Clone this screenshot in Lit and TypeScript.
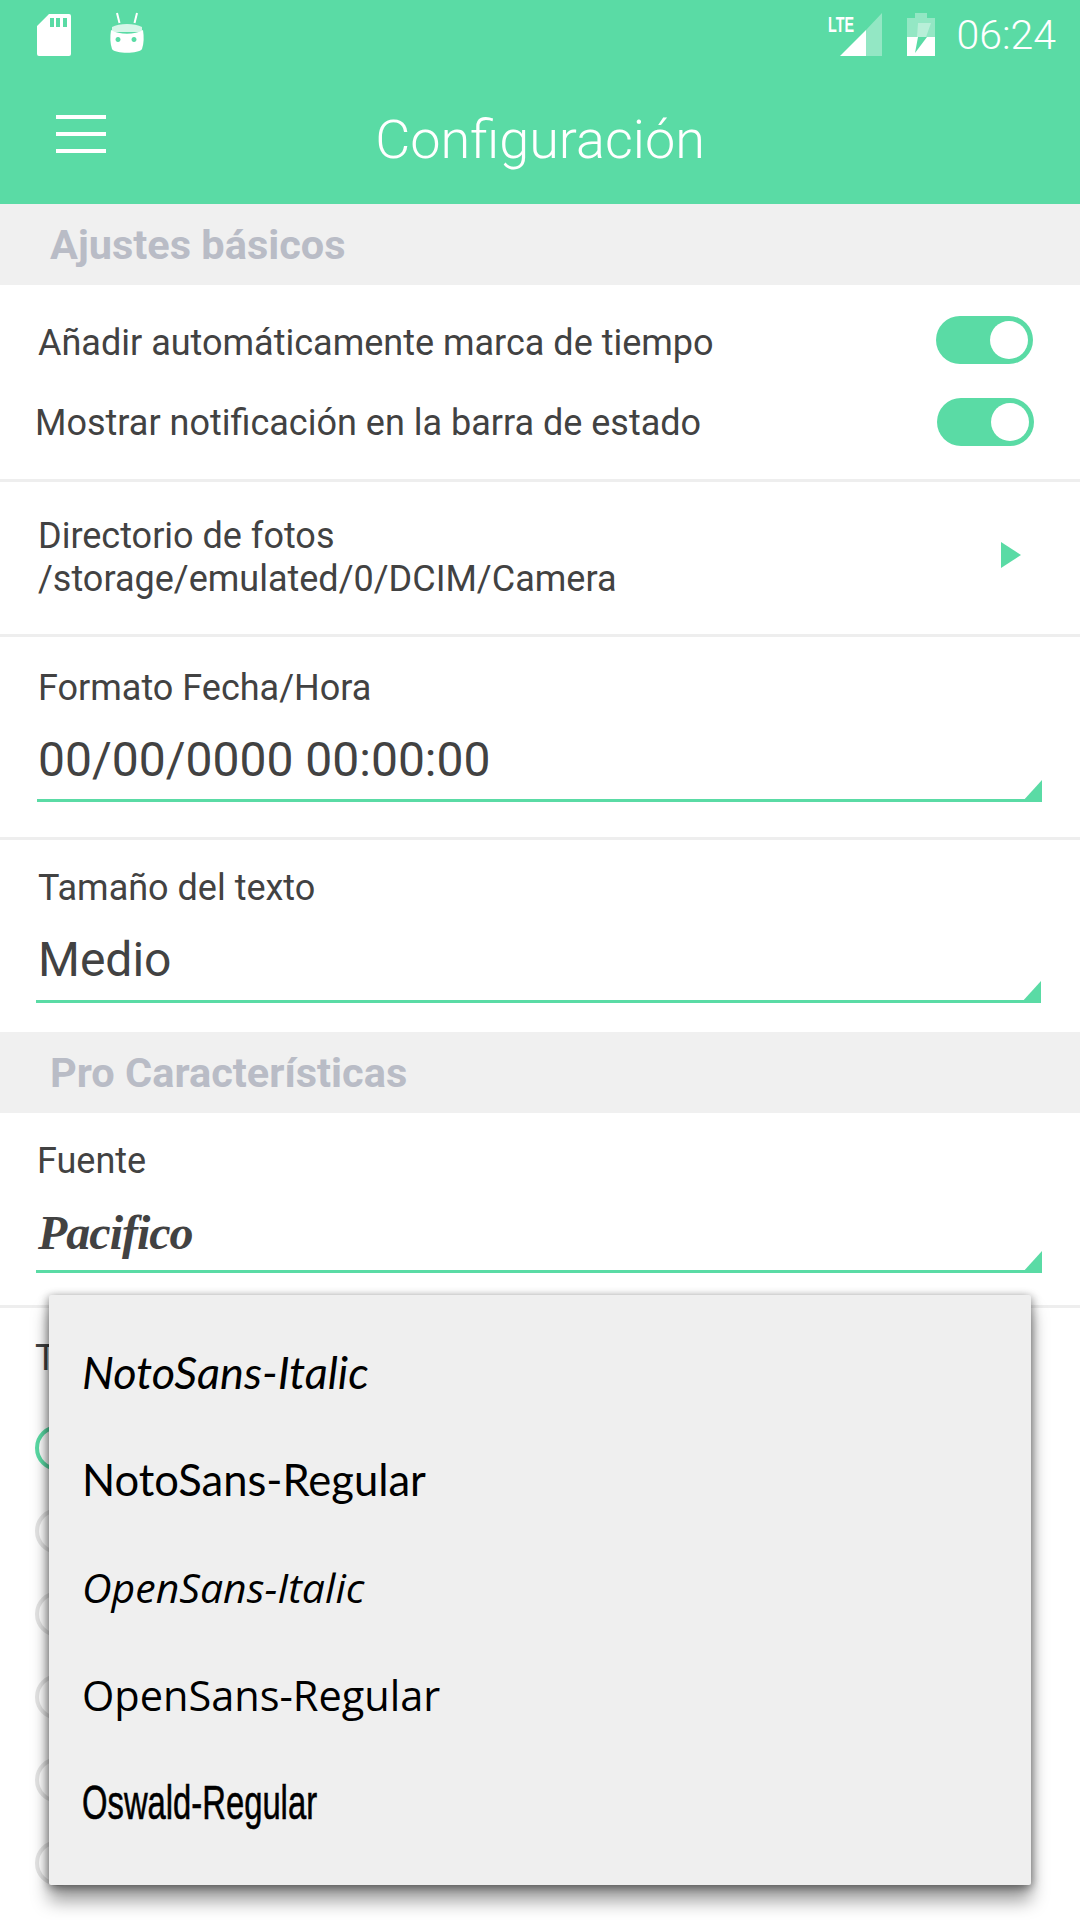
import { LitElement, html, css, svg } from "lit";
import { customElement } from "lit/decorators.js";

const fonts = [
  { name: "NotoSans-Italic", cls: "nunito-i" },
  { name: "NotoSans-Regular", cls: "nunito" },
  { name: "OpenSans-Italic", cls: "open-i" },
  { name: "OpenSans-Regular", cls: "open" },
  { name: "Oswald-Regular", cls: "oswald" },
];

const corner = svg`<svg class="corner" width="20" height="22" viewBox="0 0 20 22"><path d="M0 22 L20 0 V22 Z" fill="#5adba5"/></svg>`;

@customElement("app-root")
export class AppRoot extends LitElement {
  static styles = css`
    :host { display: block; width: 1080px; height: 1920px; overflow: hidden; position: relative; background: #fff; font-family: Roboto, sans-serif; color: #424242; }
    .top { height: 204px; background: #5adba5; color: #fff; display: flex; flex-direction: column; }
    .status { height: 70px; display: flex; align-items: center; padding: 0 24px 0 36px; }
    .status .sd { margin-right: 37px; }
    .status .droid { margin-top: -2px; }
    .status .spacer { flex: 1; }
    .status .lte { margin-right: 24px; }
    .status .bat { margin-right: 20px; }
    .clock { font-size: 41px; line-height: 70px; font-weight: 300; }
    .toolbar { flex: 1; position: relative; display: flex; align-items: center; justify-content: center; padding-top: 6px; }
    .title { font-size: 54px; line-height: 64px; font-weight: 300; }
    .menu { position: absolute; left: 56px; top: 45px; width: 50px; height: 38px; display: flex; flex-direction: column; justify-content: space-between; }
    .menu i { display: block; height: 4px; background: #fff; }
    .band { height: 81px; background: #f0f0f0; padding-left: 50px; display: flex; align-items: center; font-size: 41.500px; line-height: 48px; font-weight: 700; color: #b9bcc6; }
    .toggles { height: 194px; border-bottom: 3px solid #eee; position: relative; }
    .t-row { display: flex; align-items: center; justify-content: space-between; font-size: 36px; line-height: 44px; }
    .t-row.one { padding: 22px 47px 0 38px; height: 66px; }
    .t-row.one > span:first-child { padding-top: 6px; }
    .t-row.two { padding: 15px 46px 0 35px; height: 67px; }
    .t-row.two > span:first-child { padding-top: 2px; }
    .switch { width: 97px; height: 48px; border-radius: 24px; background: #5adba5; position: relative; flex: none; }
    .knob { position: absolute; right: 5px; top: 5px; width: 38px; height: 38px; border-radius: 50%; background: #fff; }
    .dir { height: 152px; border-bottom: 3px solid #eee; padding: 0 59px 0 38px; display: flex; align-items: center; justify-content: space-between; font-size: 36px; line-height: 43px; }
    .dir .txt { margin-top: -1px; }
    .dir svg { margin-bottom: 7px; }
    .field { border-bottom: 3px solid #eee; position: relative; padding-left: 38px; }
    .field.f1 { height: 200px; }
    .field.f2 { height: 192px; border-bottom: 0; }
    .field.f3 { height: 192px; }
    .lab { font-size: 36px; line-height: 40px; }
    .f1 .lab { padding-top: 31px; }
    .f2 .lab { padding-top: 28px; }
    .f3 .lab { padding-top: 28px; margin-left: -1px; }
    .val { font-size: 48px; line-height: 60px; }
    .f1 .val { margin-top: 22px; }
    .f2 .val { margin-top: 22px; }
    .pacifico { font-family: "Liberation Serif", serif; font-style: italic; font-weight: 700; font-size: 48px; line-height: 60px; margin-top: 22px; letter-spacing: -1px; }
    .rule { position: absolute; left: 37px; right: 38px; height: 3px; background: #5adba5; }
    .f1 .rule { top: 162px; }
    .f2 .rule { top: 160px; left: 36px; right: 39px; }
    .f3 .rule { top: 157px; left: 36px; }
    .corner { position: absolute; right: 38px; display: block; }
    .f1 .corner { top: 143px; }
    .f2 .corner { top: 141px; right: 39px; }
    .f3 .corner { top: 138px; }
    .after { height: 60px; padding: 30px 0 0 35px; font-size: 36px; line-height: 40px; }
    .radios { display: flex; flex-direction: column; gap: 37px; padding: 27px 0 0 35px; }
    .radio { width: 38px; height: 38px; border: 4px solid #e4e4e4; border-radius: 50%; display: block; }
    .radio.on { border-color: #5adba5; }
    .menu-list { position: absolute; left: 49px; top: 1295px; width: 982px; height: 590px; box-sizing: border-box; background: #efefef; box-shadow: 0 16px 18px rgba(0,0,0,.38), -2px 2px 10px rgba(0,0,0,.28), 2px 2px 10px rgba(0,0,0,.28); border-radius: 2px; padding-top: 23px; display: flex; flex-direction: column; color: #000; }
    .item { height: 107.6px; padding-left: 33px; display: flex; align-items: center; font-size: 41px; }
    .nunito-i { font-family: Lato, sans-serif; font-style: italic; font-size: 45px; }
    .nunito { font-family: Lato, sans-serif; font-size: 43.500px; }
    .open-i { font-family: "Open Sans", sans-serif; font-style: italic; font-size: 41px; }
    .open { font-family: "Open Sans", sans-serif; font-size: 41.500px; }
    .oswald span { font-family: "Liberation Sans", sans-serif; display: inline-block; transform: scaleX(.683); transform-origin: left center; font-size: 48px; -webkit-text-stroke: .6px #000; }
  `;

  render() {
    return html`
      <div class="top">
        <div class="status">
          <svg class="sd" width="36" height="44" viewBox="0 0 36 44"><path fill="#fff" fill-rule="evenodd" d="M13 1H33a2 2 0 0 1 2 2V41a2 2 0 0 1-2 2H3a2 2 0 0 1-2-2V13ZM14 5V14H18V5ZM20 5V14H24V5ZM27 5V14H31V5Z"/></svg>
          <svg class="droid" width="36" height="44" viewBox="0 0 36 44"><path fill="#fff" opacity=".75" d="M3 15C10 11 26 11 33 15L33 20H3Z"/><path fill="#fff" fill-rule="evenodd" d="M2 18C10 23 26 23 34 18C35 25 35 31 33 37C30 42 6 42 3 37C1 31 1 25 2 18ZM9 25a2.500 2.500 0 1 0 .01 0ZM25 25a2.500 2.500 0 1 0 .01 0Z"/><path stroke="#fff" stroke-width="2" d="M8 1L10.500 11M28 1L25.500 11"/></svg>
          <div class="spacer"></div>
          <svg class="lte" width="54" height="44" viewBox="0 0 54 44"><path fill="#fff" opacity=".35" d="M54 0V43H38V17Z"/><path fill="#fff" d="M12 43L38 17V43Z"/><text x="0" y="19" fill="#fff" font-family="Liberation Sans" font-weight="700" font-size="22" textLength="26" lengthAdjust="spacingAndGlyphs">LTE</text></svg>
          <svg class="bat" width="30" height="44" viewBox="0 0 30 44"><path fill="#fff" opacity=".35" d="M9 0H21V5H29V24H1V5H9Z"/><path fill="#fff" d="M1 24H12L9 40L21 24H29V43H1Z"/><path fill="#fff" opacity=".35" d="M12 10H25L20 24H11Z"/></svg>
          <span class="clock">06:24</span>
        </div>
        <div class="toolbar">
          <div class="menu"><i></i><i></i><i></i></div>
          <span class="title">Configuración</span>
        </div>
      </div>
      <div class="band">Ajustes básicos</div>
      <div class="toggles">
        <div class="t-row one"><span>Añadir automáticamente marca de tiempo</span><span class="switch"><span class="knob"></span></span></div>
        <div class="t-row two"><span>Mostrar notificación en la barra de estado</span><span class="switch"><span class="knob"></span></span></div>
      </div>
      <div class="dir">
        <div class="txt">Directorio de fotos<br />/storage/emulated/0/DCIM/Camera</div>
        <svg width="20" height="26" viewBox="0 0 20 26"><path d="M0 0L20 13L0 26Z" fill="#5adba5"/></svg>
      </div>
      <div class="field f1">
        <div class="lab">Formato Fecha/Hora</div>
        <div class="val">00/00/0000 00:00:00</div>
        <div class="rule"></div>${corner}
      </div>
      <div class="field f2">
        <div class="lab">Tamaño del texto</div>
        <div class="val">Medio</div>
        <div class="rule"></div>${corner}
      </div>
      <div class="band">Pro Características</div>
      <div class="field f3">
        <div class="lab">Fuente</div>
        <div class="pacifico">Pacifico</div>
        <div class="rule"></div>${corner}
      </div>
      <div class="after">T</div>
      <div class="radios">
        <span class="radio on"></span><span class="radio"></span><span class="radio"></span>
        <span class="radio"></span><span class="radio"></span><span class="radio"></span>
      </div>
      <div class="menu-list">
        ${fonts.map((f) => html`<div class="item ${f.cls}"><span>${f.name}</span></div>`)}
      </div>
    `;
  }
}
